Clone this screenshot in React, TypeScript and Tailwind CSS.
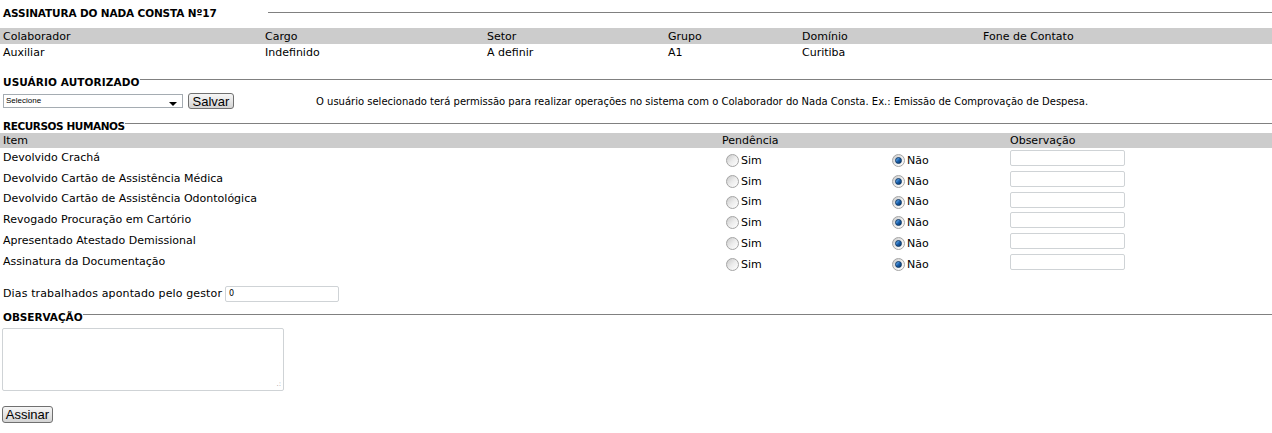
import React from 'react'

const colaborador = [
  { label: 'Colaborador', value: 'Auxiliar', w: 'w-[262px]' },
  { label: 'Cargo', value: 'Indefinido', w: 'w-[222px]' },
  { label: 'Setor', value: 'A definir', w: 'w-[181px]' },
  { label: 'Grupo', value: 'A1', w: 'w-[134px]' },
  { label: 'Domínio', value: 'Curitiba', w: 'w-[181px]' },
  { label: 'Fone de Contato', value: '', w: 'flex-1' },
]

const itens = [
  'Devolvido Crachá',
  'Devolvido Cartão de Assistência Médica',
  'Devolvido Cartão de Assistência Odontológica',
  'Revogado Procuração em Cartório',
  'Apresentado Atestado Demissional',
  'Assinatura da Documentação',
]

function Legend({ children, className = '', tracking }: { children: React.ReactNode; className?: string; tracking: string }) {
  return (
    <div className={`flex items-center h-[16px] ${className}`}>
      <span className={`font-bold pl-[3px] leading-none mt-[2px] text-[10.5px] ${tracking}`}>{children}</span>
      <span className="flex-1 h-px bg-[#808080] -mt-[3px]" />
    </div>
  )
}

function Radio({ checked }: { checked?: boolean }) {
  return (
    <span className="inline-flex items-center justify-center w-[13px] h-[13px] rounded-full border border-[#a4a4a4] bg-gradient-to-br from-[#c9c9c9] via-[#ececec] to-white">
      {checked && (
        <span className="w-[7px] h-[7px] rounded-full bg-gradient-to-br from-[#7cc4ff] via-[#1a62b0] to-[#08325f] border border-[#0b3563]" />
      )}
    </span>
  )
}

function Button({ children, className = '' }: { children: React.ReactNode; className?: string }) {
  return (
    <button
      className={`flex items-center justify-center border border-[#707070] rounded-[3px] bg-gradient-to-b from-[#f6f6f6] via-[#e6e6e6] to-[#d4d4d4] text-[13px] leading-none text-black font-['Liberation_Sans',Arial,sans-serif] ${className}`}
    >
      {children}
    </button>
  )
}

export default function App() {
  return (
    <div className="w-[1272px] h-[433px] bg-white text-black text-[11px] font-['DejaVu_Sans',Verdana,sans-serif] overflow-hidden">
      {/* Titulo */}
      <div className="flex items-center h-[26px]">
        <span className="w-[268px] pl-[3px] font-bold text-[10.5px] tracking-[-0.13px] mt-[1px]">ASSINATURA DO NADA CONSTA Nº17</span>
        <span className="flex-1 h-px bg-[#808080] -mt-[2px]" />
      </div>

      {/* Colaborador */}
      <div className="flex h-[16px] mt-[2px] bg-[#cccccc] items-center pt-[2px]">
        {colaborador.map((c) => (
          <div key={c.label} className={`${c.w} pl-[3px]`}>{c.label}</div>
        ))}
      </div>
      <div className="flex h-[15px] items-center pt-[3px]">
        {colaborador.map((c) => (
          <div key={c.label} className={`${c.w} pl-[3px]`}>{c.value}</div>
        ))}
      </div>

      {/* Usuario autorizado */}
      <Legend className="mt-[14px]" tracking="tracking-[0.1px]">USUÁRIO AUTORIZADO</Legend>
      <div className="flex items-center h-[16px] mt-[4px]">
        <div className="ml-[3px] w-[180px] h-[14px] border border-[#a5acb2] flex items-center justify-between pl-[2px] pr-[5px]">
          <span className="text-[8px] font-['Liberation_Sans',Arial,sans-serif] leading-none">Selecione</span>
          <span className="mt-[6px] w-0 h-0 border-l-[4px] border-r-[4px] border-t-[4px] border-l-transparent border-r-transparent border-t-black" />
        </div>
        <Button className="ml-[5px] w-[46px] h-[16px]">Salvar</Button>
        <span className="ml-[82px] text-[10px] pt-[1px]">
          O usuário selecionado terá permissão para realizar operações no sistema com o Colaborador do Nada Consta. Ex.: Emissão de Comprovação de Despesa.
        </span>
      </div>

      {/* Recursos humanos */}
      <Legend className="mt-[8px]" tracking="tracking-[-0.42px]">RECURSOS HUMANOS</Legend>
      <div className="flex h-[15px] bg-[#cccccc] items-center pt-[1px]">
        <div className="w-[719px] pl-[3px]">Item</div>
        <div className="w-[288px] pl-[3px]">Pendência</div>
        <div className="flex-1 pl-[3px]">Observação</div>
      </div>
      {itens.map((item) => (
        <div key={item} className="flex h-[20.7px] items-center">
          <div className="w-[719px] pl-[3px]">{item}</div>
          <div className="w-[168px] pl-[7px] flex items-center gap-[2px] mt-[5px]">
            <Radio />
            <span className="pt-[1px]">Sim</span>
          </div>
          <div className="w-[120px] pl-[5px] flex items-center gap-[2px] mt-[5px]">
            <Radio checked />
            <span className="pt-[1px]">Não</span>
          </div>
          <div className="flex-1 pl-[3px]">
            <div className="w-[115px] h-[16px] border border-[#cfd3d6] rounded-[2px]" />
          </div>
        </div>
      ))}

      {/* Dias trabalhados */}
      <div className="flex items-center h-[16px] mt-[14px]">
        <span className="pl-[3px] pt-[1px] tracking-[0.13px]">Dias trabalhados apontado pelo gestor</span>
        <div className="ml-[3px] w-[114px] h-[16px] border border-[#cfd3d6] rounded-[2px] flex items-center pl-[3px]">
          <span className="text-[8px] leading-none">0</span>
        </div>
      </div>

      {/* Observacao */}
      <Legend className="mt-[6px]" tracking="tracking-[-0.05px]">OBSERVAÇÃO</Legend>
      <div className="ml-[2px] mt-[4px] w-[282px] h-[63px] border border-[#cfd3d6] rounded-[2px] flex items-end justify-end p-[2px]">
        <span className="text-[7px] text-[#a0a0a0] leading-none">.:</span>
      </div>

      <Button className="ml-[2px] mt-[15px] w-[51px] h-[17px]">Assinar</Button>
    </div>
  )
}
